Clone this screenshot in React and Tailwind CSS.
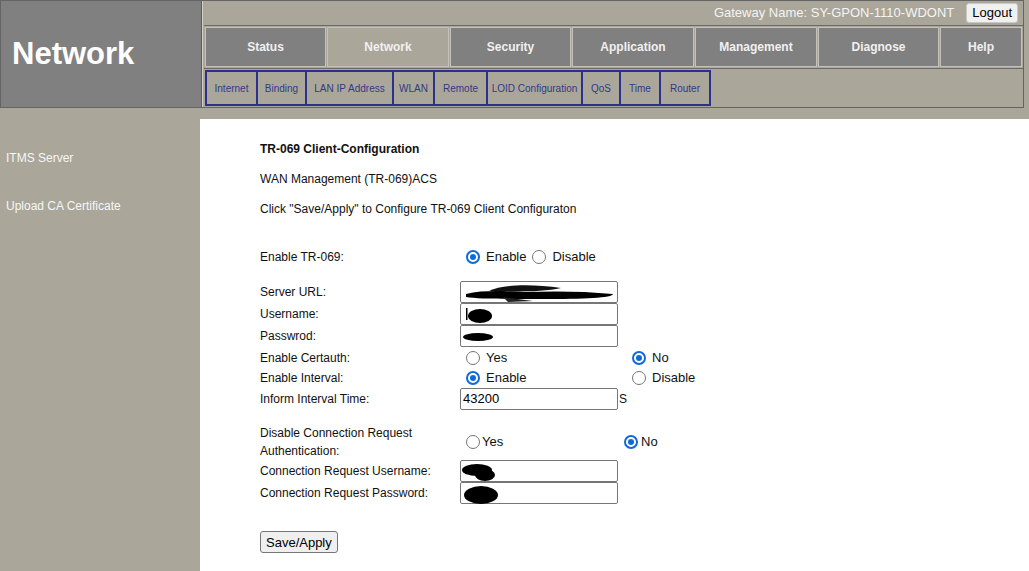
import React from 'react'

const mainTabs = [
  { name: 'Status', w: 'w-[121px]' },
  { name: 'Network', w: 'w-[122px]', active: true },
  { name: 'Security', w: 'w-[121px]' },
  { name: 'Application', w: 'w-[122px]' },
  { name: 'Management', w: 'w-[122px]' },
  { name: 'Diagnose', w: 'w-[121px]' },
  { name: 'Help', w: 'flex-1' },
]

const subTabs = [
  { name: 'Internet', w: 'w-[53px]' },
  { name: 'Binding', w: 'w-[49px]' },
  { name: 'LAN IP Address', w: 'w-[87px]' },
  { name: 'WLAN', w: 'w-[41px]' },
  { name: 'Remote', w: 'w-[53px]' },
  { name: 'LOID Configuration', w: 'w-[95px]' },
  { name: 'QoS', w: 'w-[38px]' },
  { name: 'Time', w: 'w-[40px]' },
  { name: 'Router', w: 'w-[50px]' },
]

// black scribble used to hide the values in the screenshot
function Blot({ kind }) {
  if (kind === 'url') {
    return (
      <svg width="152" height="20" viewBox="0 0 152 20" className="absolute left-[2px] top-[1px]">
        <path d="M3 11 C20 7 40 8 60 9 C90 8 120 8 150 11 C150 15 120 16 80 16 C40 16 15 16 3 14Z" fill="#000" />
        <path d="M26 8 C40 1 70 1 98 5 C80 9 50 9 26 8Z" fill="#111" />
        <path d="M40 14 L70 18 L45 19Z" fill="#222" />
      </svg>
    )
  }
  if (kind === 'user') {
    return (
      <svg width="40" height="20" viewBox="0 0 40 20" className="absolute left-[2px] top-[1px]">
        <rect x="3" y="3" width="1.5" height="12" fill="#000" />
        <ellipse cx="17" cy="11" rx="12" ry="7" fill="#000" />
      </svg>
    )
  }
  if (kind === 'pass') {
    return (
      <svg width="40" height="20" viewBox="0 0 40 20" className="absolute left-[2px] top-[1px]">
        <ellipse cx="15" cy="10" rx="15" ry="4" fill="#000" />
      </svg>
    )
  }
  if (kind === 'cuser') {
    return (
      <svg width="40" height="24" viewBox="0 0 40 24" className="absolute left-0 top-0">
        <ellipse cx="16" cy="9" rx="15" ry="6" fill="#000" />
        <ellipse cx="24" cy="14" rx="10" ry="6" fill="#000" />
      </svg>
    )
  }
  return (
    <svg width="45" height="24" viewBox="0 0 45 24" className="absolute left-[2px] top-0">
      <ellipse cx="18" cy="12" rx="17" ry="9" fill="#000" />
    </svg>
  )
}

function TextBox({ value, blot, className = '' }) {
  return (
    <div className={`relative w-[158px] h-[22px] bg-white border border-[#767676] rounded-[2px] flex items-center px-[2px] text-[13px] text-black ${className}`}>
      {value}
      {blot && <Blot kind={blot} />}
    </div>
  )
}

function Radio({ checked, label, gap = 'ml-[6px]', className = '' }) {
  return (
    <label className={`flex items-center ${className}`}>
      {checked ? (
        <span className="w-[14px] h-[14px] rounded-full border-2 border-[#0f6ad8] flex items-center justify-center">
          <span className="w-[6px] h-[6px] rounded-full bg-[#0f6ad8]" />
        </span>
      ) : (
        <span className="w-[14px] h-[14px] rounded-full border border-[#767676] bg-white" />
      )}
      <span className={`${gap} text-[13px] text-[#111]`}>{label}</span>
    </label>
  )
}

export default function App() {
  return (
    <div className="min-h-screen bg-[#aaa69a] flex flex-col" style={{ fontFamily: '"Liberation Sans", Arial, sans-serif' }}>
      {/* header */}
      <div className="flex w-[1024px] h-[108px] border border-[#646464]">
        <div className="w-[201px] bg-[#808080] border-r border-[#5e5e5e] flex items-center pl-[11px] pb-[2px]">
          <span className="text-white font-bold text-[31px] leading-none">Network</span>
        </div>
        <div className="flex-1 flex flex-col pl-[1px] border-l border-[#d2d0c6]">
          <div className="h-[24px] flex items-center justify-end pr-[5px] gap-[12px]">
            <span className="text-[13px] text-[#f4f4f4]">Gateway Name: SY-GPON-1110-WDONT</span>
            <button className="h-[20px] px-[5px] bg-[#f0f0f0] border border-[#c8c8c8] rounded-[3px] text-[13px] text-black leading-none">Logout</button>
          </div>
          <div className="h-[45px] border-y border-[#6a6a6a] flex p-[1px] gap-[1px]">
            {mainTabs.map(t => (
              <div
                key={t.name}
                className={`${t.w} flex items-center justify-center border border-[#c4c2b8] font-bold text-[12px] text-[#f0f0f0] ${t.active ? 'bg-[#aaa69a]' : 'bg-[#808080]'}`}
              >
                {t.name}
              </div>
            ))}
          </div>
          <div className="flex-1 flex pl-[1px] pt-[1px] pb-[1px]">
            {subTabs.map((t, i) => (
              <div
                key={t.name}
                className={`${t.w} h-[36px] flex items-center justify-center border-y-2 border-r-2 border-[#2b318a] ${i === 0 ? 'border-l-2' : ''} text-[10px] text-[#323a86]`}
              >
                {t.name}
              </div>
            ))}
          </div>
        </div>
      </div>

      {/* body */}
      <div className="flex flex-1 mt-[11px]">
        <div className="w-[200px] pt-[32px] pl-[6px] text-[12px] text-[#f6f6f6]">
          <div className="h-[14px] leading-[14px]">ITMS Server</div>
          <div className="h-[14px] leading-[14px] mt-[34px]">Upload CA Certificate</div>
        </div>
        <div className="flex-1 bg-white pl-[60px] pt-[23px] text-[12px] text-[#111]">
          <div className="font-bold h-[14px] leading-[14px]">TR-069 Client-Configuration</div>
          <div className="h-[14px] leading-[14px] mt-[16px]">WAN Management (TR-069)ACS</div>
          <div className="h-[14px] leading-[14px] mt-[16px]">Click "Save/Apply" to Configure TR-069 Client Configuraton</div>

          <div className="flex items-center h-[20px] mt-[31px]">
            <div className="w-[200px]">Enable TR-069:</div>
            <Radio checked label="Enable" className="ml-[6px]" />
            <Radio label="Disable" className="ml-[6px]" />
          </div>

          <div className="mt-[14px]">
            <div className="flex items-center h-[22px]">
              <div className="w-[200px]">Server URL:</div>
              <TextBox blot="url" />
            </div>
            <div className="flex items-center h-[22px]">
              <div className="w-[200px]">Username:</div>
              <TextBox blot="user" />
            </div>
            <div className="flex items-center h-[22px]">
              <div className="w-[200px]">Passwrod:</div>
              <TextBox blot="pass" />
            </div>
            <div className="flex items-center h-[21px]">
              <div className="w-[200px]">Enable Certauth:</div>
              <div className="w-[172px] pl-[6px]"><Radio label="Yes" /></div>
              <Radio checked label="No" />
            </div>
            <div className="flex items-center h-[20px]">
              <div className="w-[200px]">Enable Interval:</div>
              <div className="w-[172px] pl-[6px]"><Radio checked label="Enable" /></div>
              <Radio label="Disable" />
            </div>
            <div className="flex items-center h-[22px]">
              <div className="w-[200px]">Inform Interval Time:</div>
              <TextBox value="43200" />
              <span className="ml-[1px]">S</span>
            </div>
          </div>

          <div className="flex items-center h-[36px] mt-[14px]">
            <div className="w-[200px] leading-[18px]">Disable Connection Request<br />Authentication:</div>
            <div className="w-[164px] pl-[6px]"><Radio label="Yes" gap="ml-[2px]" /></div>
            <Radio checked label="No" gap="ml-[3px]" />
          </div>
          <div className="flex items-center h-[22px]">
            <div className="w-[200px]">Connection Request Username:</div>
            <TextBox blot="cuser" />
          </div>
          <div className="flex items-center h-[22px]">
            <div className="w-[200px]">Connection Request Password:</div>
            <TextBox blot="cpass" />
          </div>

          <button className="mt-[27px] h-[22px] px-[5px] bg-[#efefef] border border-[#767676] rounded-[3px] text-[13px] text-black leading-none">Save/Apply</button>
        </div>
      </div>
    </div>
  )
}
